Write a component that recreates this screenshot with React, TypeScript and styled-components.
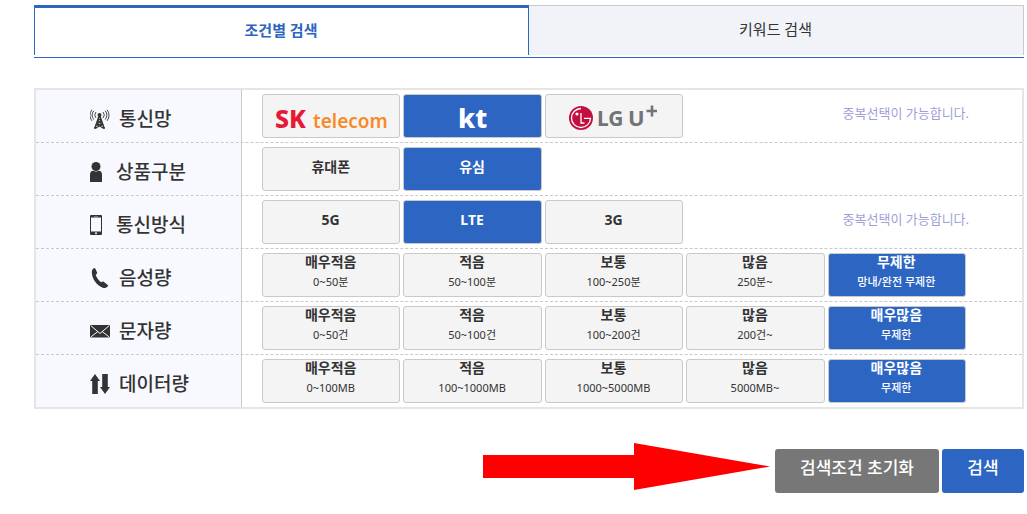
import React, { useState } from "react";
import styled, { createGlobalStyle, css } from "styled-components";

const BLUE = "#2d65c3";
const INK = "#333333";

const GlobalStyle = createGlobalStyle`
  *, *::before, *::after { box-sizing: border-box; }
  body {
    margin: 0;
    background: #fff;
    color: ${INK};
    font-family: "Noto Sans", "Noto Sans CJK KR", sans-serif;
  }
  button { font-family: inherit; cursor: pointer; }
`;

const Page = styled.main`
  padding: 5px 3px 20px 34px;
`;

const Tabs = styled.div`
  display: grid;
  grid-template-columns: 1fr 1fr;
  padding-bottom: 2px;
  border-bottom: 1px solid ${BLUE};
`;

const Tab = styled.button<{ $active: boolean }>`
  height: 50px;
  padding: 0 1px 3px 0;
  font-size: 15px;
  line-height: 20px;
  ${({ $active }) =>
    $active
      ? css`
          border: 1px solid ${BLUE};
          border-top-width: 3px;
          border-bottom: 0;
          background: #fff;
          color: ${BLUE};
          font-weight: 700;
        `
      : css`
          border: 1px solid #c9c9c9;
          border-width: 1px 1px 0 0;
          background: #f2f3f8;
          color: ${INK};
          font-weight: 400;
        `}
`;

const Panel = styled.div`
  margin-top: 30px;
  border: 2px solid #e5e5e5;
`;

const Row = styled.div`
  display: flex;
  & + & { border-top: 1px dashed #c9c9c9; }
`;

const RowHead = styled.div`
  flex: 0 0 206px;
  display: flex;
  align-items: center;
  gap: 9px;
  padding: 6px 0 0 54px;
  border-right: 1px solid #c9c9c9;
  background: #f8f9fe;
`;

const RowLabel = styled.span`
  font-size: 19px;
  line-height: 26px;
  font-weight: 500;
  white-space: nowrap;
`;

const Options = styled.div`
  flex: 1;
  display: grid;
  grid-template-columns: repeat(5, minmax(0, 1fr));
  gap: 3px;
  padding: 4px 56px 4px 20px;
`;

const Option = styled.button<{ $on: boolean }>`
  display: flex;
  flex-direction: column;
  align-items: center;
  height: 44px;
  padding: 0 1px 0 0;
  border: 1px solid #c9c9c9;
  border-radius: 3px;
  background: ${({ $on }) => ($on ? BLUE : "#f4f4f4")};
  color: ${({ $on }) => ($on ? "#fff" : INK)};
  white-space: nowrap;
`;

const Title = styled.span<{ $single: boolean }>`
  padding-top: ${({ $single }) => ($single ? 11 : 0)}px;
  font-size: 14px;
  line-height: 16px;
  font-weight: 700;
`;

const Detail = styled.span<{ $on: boolean }>`
  font-size: 11px;
  line-height: 24px;
  font-weight: ${({ $on }) => ($on ? 500 : 400)};
`;

const Note = styled.span`
  grid-column: 5;
  padding: 9px 0 0 15px;
  color: #9f9fd8;
  font-size: 13px;
  line-height: 20px;
  white-space: nowrap;
`;

const Actions = styled.div`
  display: flex;
  justify-content: flex-end;
  align-items: flex-end;
  gap: 3px;
  margin-top: 34px;
`;

const Pointer = styled.svg`
  margin: 0 2px 3px 0;
`;

const Action = styled.button<{ $primary?: boolean }>`
  min-width: 82px;
  height: 44px;
  padding: 0 25px 6px;
  border: 0;
  border-radius: 3px;
  background: ${({ $primary }) => ($primary ? BLUE : "#777")};
  color: #fff;
  font-size: 17px;
  line-height: 24px;
  font-weight: 500;
  white-space: nowrap;
`;

const LogoText = styled.text`
  font-family: "Noto Sans", sans-serif;
`;

const SkLogo = () => (
  <svg width="114" height="42" viewBox="0 0 114 42" role="img" aria-label="SK telecom">
    <LogoText x="1" y="33" fontSize="25" fontWeight="800" fill="#e71a36">SK</LogoText>
    <LogoText x="39" y="33" fontSize="19" fontWeight="600" fill="#f78b2b">telecom</LogoText>
  </svg>
);

const KtLogo = () => (
  <svg width="30" height="42" viewBox="0 0 30 42" role="img" aria-label="kt">
    <LogoText x="1" y="33" fontSize="27" fontWeight="800" fill="#fff">kt</LogoText>
  </svg>
);

const LgLogo = () => (
  <svg width="88" height="42" viewBox="0 0 88 42" role="img" aria-label="LG U+">
    <circle cx="12" cy="23" r="12" fill="#c30f40" />
    <path d="M12 13.500a9.500 9.500 0 1 0 9.500 9.800H15" fill="none" stroke="#fff" strokeWidth="1.300" />
    <path d="M12 18v10h3.400" fill="none" stroke="#fff" strokeWidth="1.300" />
    <circle cx="8" cy="19" r="1.600" fill="#fff" />
    <LogoText x="28" y="31" fontSize="21" fontWeight="700" fill="#727478">LG</LogoText>
    <LogoText x="59" y="31" fontSize="22" fontWeight="700" fill="#727478">U</LogoText>
    <path d="M83 10.500v11M77.500 16h10.500" stroke="#727478" strokeWidth="2.600" />
  </svg>
);

const TowerIcon = () => (
  <svg width="20" height="20" viewBox="0 0 20 20" fill="none" stroke={INK} aria-hidden="true">
    <circle cx="9.500" cy="6" r="2" fill={INK} stroke="none" />
    <path d="M9.500 6 4.800 19.500M9.500 6l4.700 13.500M8.300 10.500h2.600M7.500 13h4.200M6.500 15.500h6.200M4 19h2.500M12.500 19H15" strokeWidth="1.500" />
    <path d="m8 11.500 4.500 4L5.500 19M11 11.500l-4.500 4 7 3.500" strokeWidth="1.200" />
    <path d="M6 3a4.500 4.500 0 0 0 0 6M13 3a4.500 4.500 0 0 1 0 6M3.800 1.800a7 7 0 0 0 0 8.700M15.200 1.800a7 7 0 0 1 0 8.700M1.900.8a9.500 9.500 0 0 0 0 11M17.100.8a9.500 9.500 0 0 1 0 11" strokeWidth=".9" />
  </svg>
);

const PersonIcon = () => (
  <svg width="17" height="20" viewBox="0 0 17 20" fill={INK} aria-hidden="true">
    <circle cx="6" cy="4.500" r="4.500" />
    <path d="M0 20v-7q0-4 3-4.200 3 1.600 6 0 3 .2 3 4.200v7z" />
  </svg>
);

const MobileIcon = () => (
  <svg width="17" height="20" viewBox="0 0 17 20" aria-hidden="true">
    <rect width="12" height="20" rx="1" fill={INK} />
    <rect x="1" y="2.500" width="10" height="14" fill="#f8f9fe" />
    <rect x="4" y="1" width="4" height=".7" fill="#999" />
    <circle cx="6" cy="18.200" r="1" fill="#f8f9fe" />
  </svg>
);

const CallIcon = () => (
  <svg width="20" height="20" viewBox="0 0 20 20" fill={INK} aria-hidden="true">
    <path d="M4.300 0c.5 0 .9.300 1.100.8L7 4.300c.3.700.1 1.200-.4 1.600l-.9.800c1 3 2.900 5.600 5.400 7.600l1.200-.6c.5-.3 1-.2 1.400.1l3.800 3c.6.500.6 1.100.1 1.600-1.200 1.300-3 1.900-4.800 1.300C7.500 18 2 11.500 1.800 4.500 1.800 2.200 2.700.6 4.300 0z" />
  </svg>
);

const MailIcon = () => (
  <svg width="20" height="20" viewBox="0 0 20 20" aria-hidden="true">
    <rect y="4" width="20" height="12.500" rx="1" fill={INK} />
    <path d="m1 4.800 9 7.700 9-7.700M1 15.800l6.800-5.200M19 15.800l-6.800-5.200" fill="none" stroke="#f8f9fe" strokeWidth="1" />
  </svg>
);

const DataIcon = () => (
  <svg width="20" height="20" viewBox="0 0 20 20" fill={INK} aria-hidden="true">
    <path d="M5 0l5 7H7.800v13H2.200V7H0zM15 20l-5-7h2.200V0h5.600v13H20z" />
  </svg>
);

type Choice = { title?: string; detail?: string; logo?: () => React.JSX.Element };
type Group = {
  id: string;
  label: string;
  icon: () => React.JSX.Element;
  choices: Choice[];
  selected: number;
  multiple?: boolean;
};

const groups: Group[] = [
  { id: "network", label: "통신망", icon: TowerIcon, selected: 1, multiple: true,
    choices: [{ logo: SkLogo }, { logo: KtLogo }, { logo: LgLogo }] },
  { id: "product", label: "상품구분", icon: PersonIcon, selected: 1,
    choices: [{ title: "휴대폰" }, { title: "유심" }] },
  { id: "method", label: "통신방식", icon: MobileIcon, selected: 1, multiple: true,
    choices: [{ title: "5G" }, { title: "LTE" }, { title: "3G" }] },
  { id: "voice", label: "음성량", icon: CallIcon, selected: 4,
    choices: [
      { title: "매우적음", detail: "0~50분" },
      { title: "적음", detail: "50~100분" },
      { title: "보통", detail: "100~250분" },
      { title: "많음", detail: "250분~" },
      { title: "무제한", detail: "망내/완전 무제한" },
    ] },
  { id: "message", label: "문자량", icon: MailIcon, selected: 4,
    choices: [
      { title: "매우적음", detail: "0~50건" },
      { title: "적음", detail: "50~100건" },
      { title: "보통", detail: "100~200건" },
      { title: "많음", detail: "200건~" },
      { title: "매우많음", detail: "무제한" },
    ] },
  { id: "data", label: "데이터량", icon: DataIcon, selected: 4,
    choices: [
      { title: "매우적음", detail: "0~100MB" },
      { title: "적음", detail: "100~1000MB" },
      { title: "보통", detail: "1000~5000MB" },
      { title: "많음", detail: "5000MB~" },
      { title: "매우많음", detail: "무제한" },
    ] },
];

const initial = () => groups.map((g) => [g.selected]);

export default function App() {
  const [tab, setTab] = useState(0);
  const [picked, setPicked] = useState<number[][]>(initial);

  const toggle = (row: number, index: number) =>
    setPicked((prev) =>
      prev.map((list, i) => {
        if (i !== row) return list;
        if (!groups[row].multiple) return [index];
        return list.includes(index) ? list.filter((n) => n !== index) : [...list, index];
      })
    );

  return (
    <>
      <GlobalStyle />
      <Page>
        <Tabs role="tablist">
          {["조건별 검색", "키워드 검색"].map((name, i) => (
            <Tab key={name} type="button" role="tab" aria-selected={tab === i} $active={tab === i} onClick={() => setTab(i)}>
              {name}
            </Tab>
          ))}
        </Tabs>
        <Panel>
          {groups.map(({ id, label, icon: Icon, choices, multiple }, row) => (
            <Row key={id} role="group" aria-labelledby={id}>
              <RowHead>
                <Icon />
                <RowLabel id={id}>{label}</RowLabel>
              </RowHead>
              <Options>
                {choices.map(({ title, detail, logo: Logo }, i) => {
                  const on = picked[row].includes(i);
                  return (
                    <Option key={i} type="button" aria-pressed={on} $on={on} onClick={() => toggle(row, i)}>
                      {Logo && <Logo />}
                      {title && <Title $single={!detail}>{title}</Title>}
                      {detail && <Detail $on={on}>{detail}</Detail>}
                    </Option>
                  );
                })}
                {multiple && <Note>중복선택이 가능합니다.</Note>}
              </Options>
            </Row>
          ))}
        </Panel>
        <Actions>
          <Pointer width="287" height="47" viewBox="0 0 287 47" fill="#ff0000" aria-hidden="true">
            <path d="M0 12h151V0l136 23.500L151 47V35H0z" />
          </Pointer>
          <Action type="button" onClick={() => setPicked(initial())}>검색조건 초기화</Action>
          <Action type="button" $primary>검색</Action>
        </Actions>
      </Page>
    </>
  );
}
